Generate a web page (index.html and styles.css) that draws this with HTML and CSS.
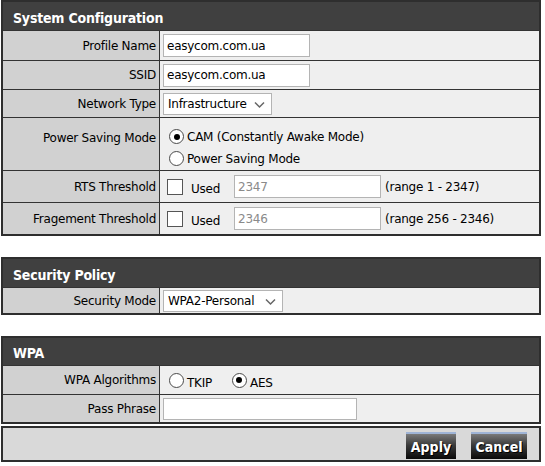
FILE: index.html
```html
<!DOCTYPE html>
<html>
<head>
<meta charset="utf-8">
<link rel="stylesheet" href="styles.css">
</head>
<body>
<div class="page">
  <section class="panel">
    <div class="panel-head tall">System Configuration</div>
    <div class="row h29">
      <div class="label">Profile Name</div>
      <div class="value"><span class="field w147">easycom.com.ua</span></div>
    </div>
    <div class="row h28">
      <div class="label">SSID</div>
      <div class="value"><span class="field w147">easycom.com.ua</span></div>
    </div>
    <div class="row h27">
      <div class="label">Network Type</div>
      <div class="value"><span class="select w108">Infrastructure<svg class="chev" width="11" height="8" viewBox="0 0 11 8"><path d="M1 1.5 L5.5 6 L10 1.5" fill="none" stroke="#666" stroke-width="1.5"/></svg></span></div>
    </div>
    <div class="row h52">
      <div class="label top">Power Saving Mode</div>
      <div class="value stack">
        <label class="opt"><span class="radio on"></span>CAM (Constantly Awake Mode)</label>
        <label class="opt"><span class="radio"></span>Power Saving Mode</label>
      </div>
    </div>
    <div class="row h31">
      <div class="label">RTS Threshold</div>
      <div class="value"><span class="check"></span><span class="used">Used</span><span class="field dis w146">2347</span><span class="range">(range 1 - 2347)</span></div>
    </div>
    <div class="row h31">
      <div class="label">Fragement Threshold</div>
      <div class="value"><span class="check"></span><span class="used">Used</span><span class="field dis w146">2346</span><span class="range">(range 256 - 2346)</span></div>
    </div>
  </section>

  <section class="panel gap">
    <div class="panel-head tall">Security Policy</div>
    <div class="row h26">
      <div class="label">Security Mode</div>
      <div class="value"><span class="select w119">WPA2-Personal<svg class="chev" width="11" height="8" viewBox="0 0 11 8"><path d="M1 1.5 L5.5 6 L10 1.5" fill="none" stroke="#666" stroke-width="1.5"/></svg></span></div>
    </div>
  </section>

  <section class="panel gap">
    <div class="panel-head">WPA</div>
    <div class="row h28">
      <div class="label">WPA Algorithms</div>
      <div class="value algo">
        <label class="opt"><span class="radio"></span><span class="low">TKIP</span></label>
        <label class="opt aes"><span class="radio on"></span><span class="low">AES</span></label>
      </div>
    </div>
    <div class="row h27">
      <div class="label">Pass Phrase</div>
      <div class="value"><span class="field w193"></span></div>
    </div>
  </section>

  <div class="actions">
    <button class="btn apply">Apply</button>
    <button class="btn cancel">Cancel</button>
  </div>
</div>
</body>
</html>
```
FILE: styles.css
```css
* { box-sizing: border-box; }
body {
  margin: 0;
  background: #ffffff;
  font-family: "DejaVu Sans", Verdana, sans-serif;
  font-size: 12px;
  letter-spacing: -0.25px;
  color: #000;
}
.page {
  width: 543px;
  padding: 0 2px 0 1px;
}
.panel {
  border: 2px solid #2e2e2e;
}
.panel.gap { margin-top: 21px; }
.panel-head {
  height: 27px;
  background: #404040;
  color: #fff;
  font-family: "DejaVu Sans Condensed", "DejaVu Sans", sans-serif;
  font-weight: bold;
  font-size: 14px;
  letter-spacing: -0.2px;
  display: flex;
  align-items: center;
  padding: 3px 0 0 10px;
}
.panel-head.tall { height: 28px; }
.row {
  display: grid;
  grid-template-columns: 157px 1fr;
  border-top: 1px solid #333;
}
.h26 { height: 26px; }
.h27 { height: 28px; }
.h28 { height: 29px; }
.h29 { height: 30px; }
.h31 { height: 32px; }
.h52 { height: 53px; }
.label {
  background: #d1d1d1;
  border-right: 1px solid #333;
  text-align: right;
  padding-right: 3px;
  display: flex;
  align-items: center;
  justify-content: flex-end;
}
.label.top {
  align-items: flex-start;
  padding-top: 13px;
}
.value {
  background: #efefef;
  display: flex;
  align-items: center;
  padding-left: 3px;
}
.stack {
  flex-direction: column;
  align-items: flex-start;
  justify-content: center;
  gap: 7px;
  padding-left: 9px;
  padding-top: 7px;
}
.field {
  display: inline-flex;
  align-items: center;
  height: 23px;
  background: #fff;
  border: 1px solid #b4b4b4;
  padding-left: 3px;
}
.field.dis { color: #8a8a8a; margin-left: 14px; }
.w146 { width: 147px; }
.w147 { width: 147px; }
.w193 { width: 194px; height: 22px; }
.select {
  position: relative;
  display: inline-flex;
  align-items: center;
  height: 22px;
  background: #fff;
  border: 1px solid #b4b4b4;
  padding-left: 4px;
}
.w108 { width: 109px; }
.w119 { width: 120px; }
.chev {
  position: absolute;
  right: 6px;
  top: 7px;
}
.opt {
  display: flex;
  align-items: center;
}
.radio {
  width: 15px;
  height: 15px;
  border-radius: 50%;
  border: 1px solid #4a4a4a;
  background: #fff;
  margin-right: 3px;
  position: relative;
  flex: none;
}
.radio.on::after {
  content: "";
  position: absolute;
  left: 3.5px;
  top: 3.5px;
  width: 6px;
  height: 6px;
  border-radius: 50%;
  background: #000;
}
.algo { padding-left: 9px; }
.algo .aes { margin-left: 20px; }
.low { padding-top: 5px; }
.check {
  width: 16px;
  height: 16px;
  border: 1px solid #555;
  background: #fff;
  margin-left: 4px;
  flex: none;
}
.used { margin-left: 8px; padding-top: 4px; }
.range { margin-left: 4px; }
.actions {
  margin-top: 2px;
  height: 36px;
  border: 2px solid #2e2e2e;
  background: #d9d9d9;
  display: flex;
  justify-content: flex-end;
  align-items: flex-end;
  gap: 15px;
  padding: 0 12px 1px 0;
}
.btn {
  height: 27px;
  border: none;
  border-top: 2px solid #9fb4d6;
  background: linear-gradient(#7a7a7a, #3a3a3a 45%, #0a0a0a);
  color: #fff;
  font-family: "DejaVu Sans Condensed", "DejaVu Sans", sans-serif;
  font-weight: bold;
  font-size: 14px;
  letter-spacing: 0;
  text-shadow: 1px 1px 0 #000;
  padding: 0;
}
.apply { width: 50px; }
.cancel { width: 56px; }
```
